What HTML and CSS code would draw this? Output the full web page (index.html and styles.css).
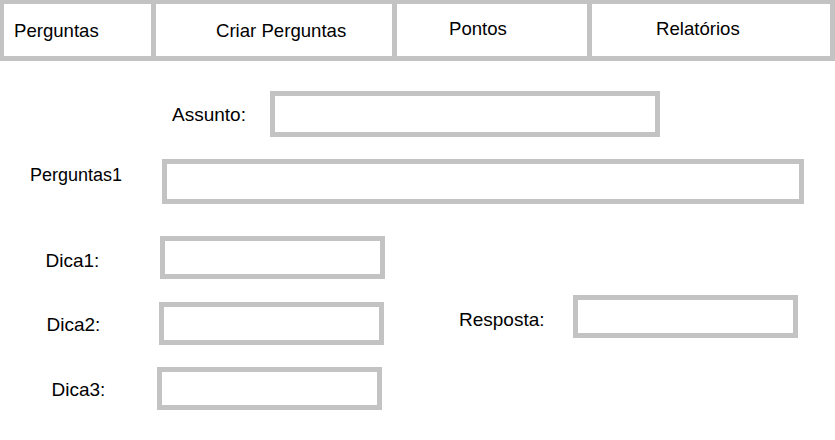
FILE: index.html
```html
<!DOCTYPE html>
<html lang="pt">
<head>
<meta charset="utf-8">
<title>Criar Perguntas</title>
<link rel="stylesheet" href="styles.css">
</head>
<body>
<nav class="tabs">
  <div class="tab tab-1">Perguntas</div>
  <div class="tab tab-2">Criar Perguntas</div>
  <div class="tab tab-3">Pontos</div>
  <div class="tab tab-4">Relatórios</div>
</nav>
<form class="form">
  <div class="row row-assunto">
    <label class="label lab-assunto">Assunto:</label>
    <div class="field field-assunto"></div>
  </div>
  <div class="row row-pergunta">
    <label class="label lab-pergunta">Perguntas1</label>
    <div class="field field-pergunta"></div>
  </div>
  <div class="row row-dica1">
    <label class="label lab-dica1">Dica1:</label>
    <div class="field field-dica"></div>
  </div>
  <div class="row row-dica2">
    <label class="label lab-dica2">Dica2:</label>
    <div class="field field-dica field-dica2"></div>
    <label class="label lab-resposta">Resposta:</label>
    <div class="field field-dica"></div>
  </div>
  <div class="row row-dica3">
    <label class="label lab-dica3">Dica3:</label>
    <div class="field field-dica"></div>
  </div>
</form>
</body>
</html>
```
FILE: styles.css
```css
html, body {
  margin: 0;
  padding: 0;
  background: #ffffff;
}
body {
  font-family: "Liberation Sans", Arial, sans-serif;
  color: #000000;
  width: 835px;
  height: 440px;
  overflow: hidden;
}
.tabs {
  display: grid;
  grid-template-columns: 147px 236px 190px 238px;
  column-gap: 5px;
  background: #c3c3c3;
  padding: 4px 5px 5px 4px;
  height: 52px;
}
.tab {
  background: #ffffff;
  font-size: 18.6px;
  line-height: 22px;
  white-space: nowrap;
}
.tab-1 { padding: 16px 0 0 10px; }
.tab-2 { padding: 16px 0 0 60px; }
.tab-3 { padding: 14px 0 0 52px; }
.tab-4 { padding: 14px 0 0 64px; }

.form {
  display: flex;
  flex-direction: column;
  margin-top: 30px;
}
.row {
  display: flex;
  align-items: flex-start;
}
.label {
  font-size: 19px;
  line-height: 22px;
  white-space: nowrap;
  box-sizing: border-box;
  flex: none;
}
.field {
  box-sizing: border-box;
  border: 5px solid #c3c3c3;
  background: #ffffff;
  flex: none;
}
.lab-assunto { width: 270px; padding-left: 172px; margin-top: 13px; }
.field-assunto { width: 390px; height: 46px; }

.row-pergunta { margin-top: 22px; }
.lab-pergunta { width: 162px; padding-left: 30px; margin-top: 5px; font-size: 18px; }
.field-pergunta { width: 642px; height: 45px; }

.row-dica1 { margin-top: 32px; }
.lab-dica1 { width: 160px; padding-left: 45.5px; margin-top: 14px; }
.field-dica { width: 225px; height: 43px; }

.row-dica2 { margin-top: 16px; }
.lab-dica2 { width: 159px; padding-left: 46.5px; margin-top: 19px; }
.field-dica2 { margin-top: 7px; }
.lab-resposta { width: 189px; padding-left: 75px; margin-top: 14px; }

.row-dica3 { margin-top: 22px; }
.lab-dica3 { width: 157px; padding-left: 51.5px; margin-top: 12px; }
```
